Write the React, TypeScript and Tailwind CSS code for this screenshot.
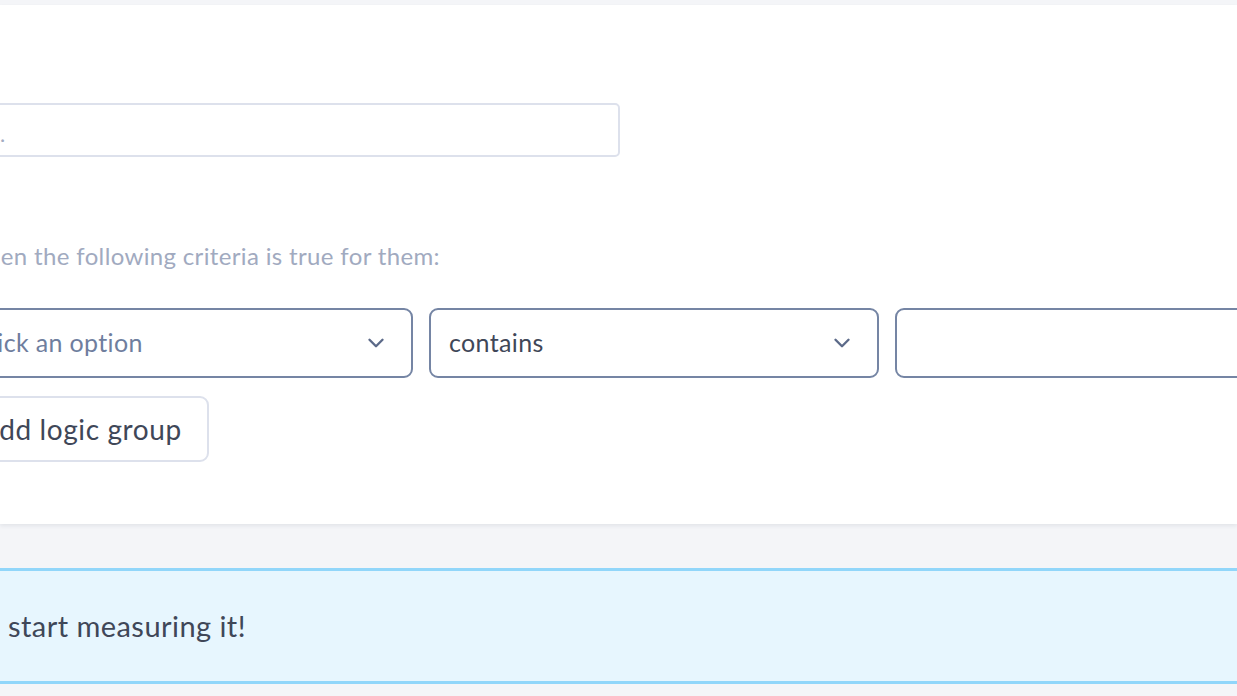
import { ChevronDown } from "lucide-react";

const font = { fontFamily: '"Lato", "Open Sans", sans-serif' };

function Select({ value, placeholder, width }: { value?: string; placeholder?: string; width: string }) {
	return (
		<div
			className={`${width} h-[70px] shrink-0 flex items-center justify-between pl-[18px] pr-[22px] rounded-[9px] border-2 border-[#7585a4] bg-white`}
		>
			<span className={`text-[25px] tracking-[0.35px] ${value ? "text-[#3f4758]" : "text-[#6f7e9e]"}`}>
				{value ?? placeholder}
			</span>
			<ChevronDown className="w-[26px] h-[26px] text-[#5c6a89]" strokeWidth={2.2} />
		</div>
	);
}

export default function App() {
	return (
		<div className="h-[696px] w-[1237px] overflow-hidden bg-[#f4f5f8] pt-[5px]" style={font}>
			<div className="h-[519px] bg-white shadow-[0_2px_4px_rgba(30,40,70,0.08)]">
				<div className="ml-[-38px] pt-[98px] flex flex-col">
					<div className="w-[658px] h-[54px] rounded-[5px] border-2 border-[#dde1ec] flex items-center">
						<span className="ml-[36px] mt-[8px] text-[22px] text-[#a3acc2] leading-none">.</span>
					</div>

					<p className="mt-[84px] h-[30px] leading-[30px] text-[24px] tracking-[0.35px] text-[#a1aac0]">
						When the following criteria is true for them:
					</p>

					<div className="mt-[37px] flex gap-[16px]">
						<Select width="w-[451px]" placeholder="Pick an option" />
						<Select width="w-[450px]" value="contains" />
						<div className="w-[460px] h-[70px] shrink-0 rounded-[9px] border-2 border-[#7585a4]" />
					</div>

					<div className="mt-[18px]">
						<button className="w-[247px] h-[66px] rounded-[9px] border-2 border-[#dde1ec] text-[28px] tracking-[0.6px] text-[#3f4758] pl-[16px] text-left">
							Add logic group
						</button>
					</div>
				</div>
			</div>

			<div className="mt-[44px] h-[116px] border-y-[3px] border-[#91d6fa] bg-[#e7f6fe] flex items-center">
				<span className="ml-[8px] text-[29px] tracking-[0.45px] text-[#3f4758]">start measuring it!</span>
			</div>
		</div>
	);
}
